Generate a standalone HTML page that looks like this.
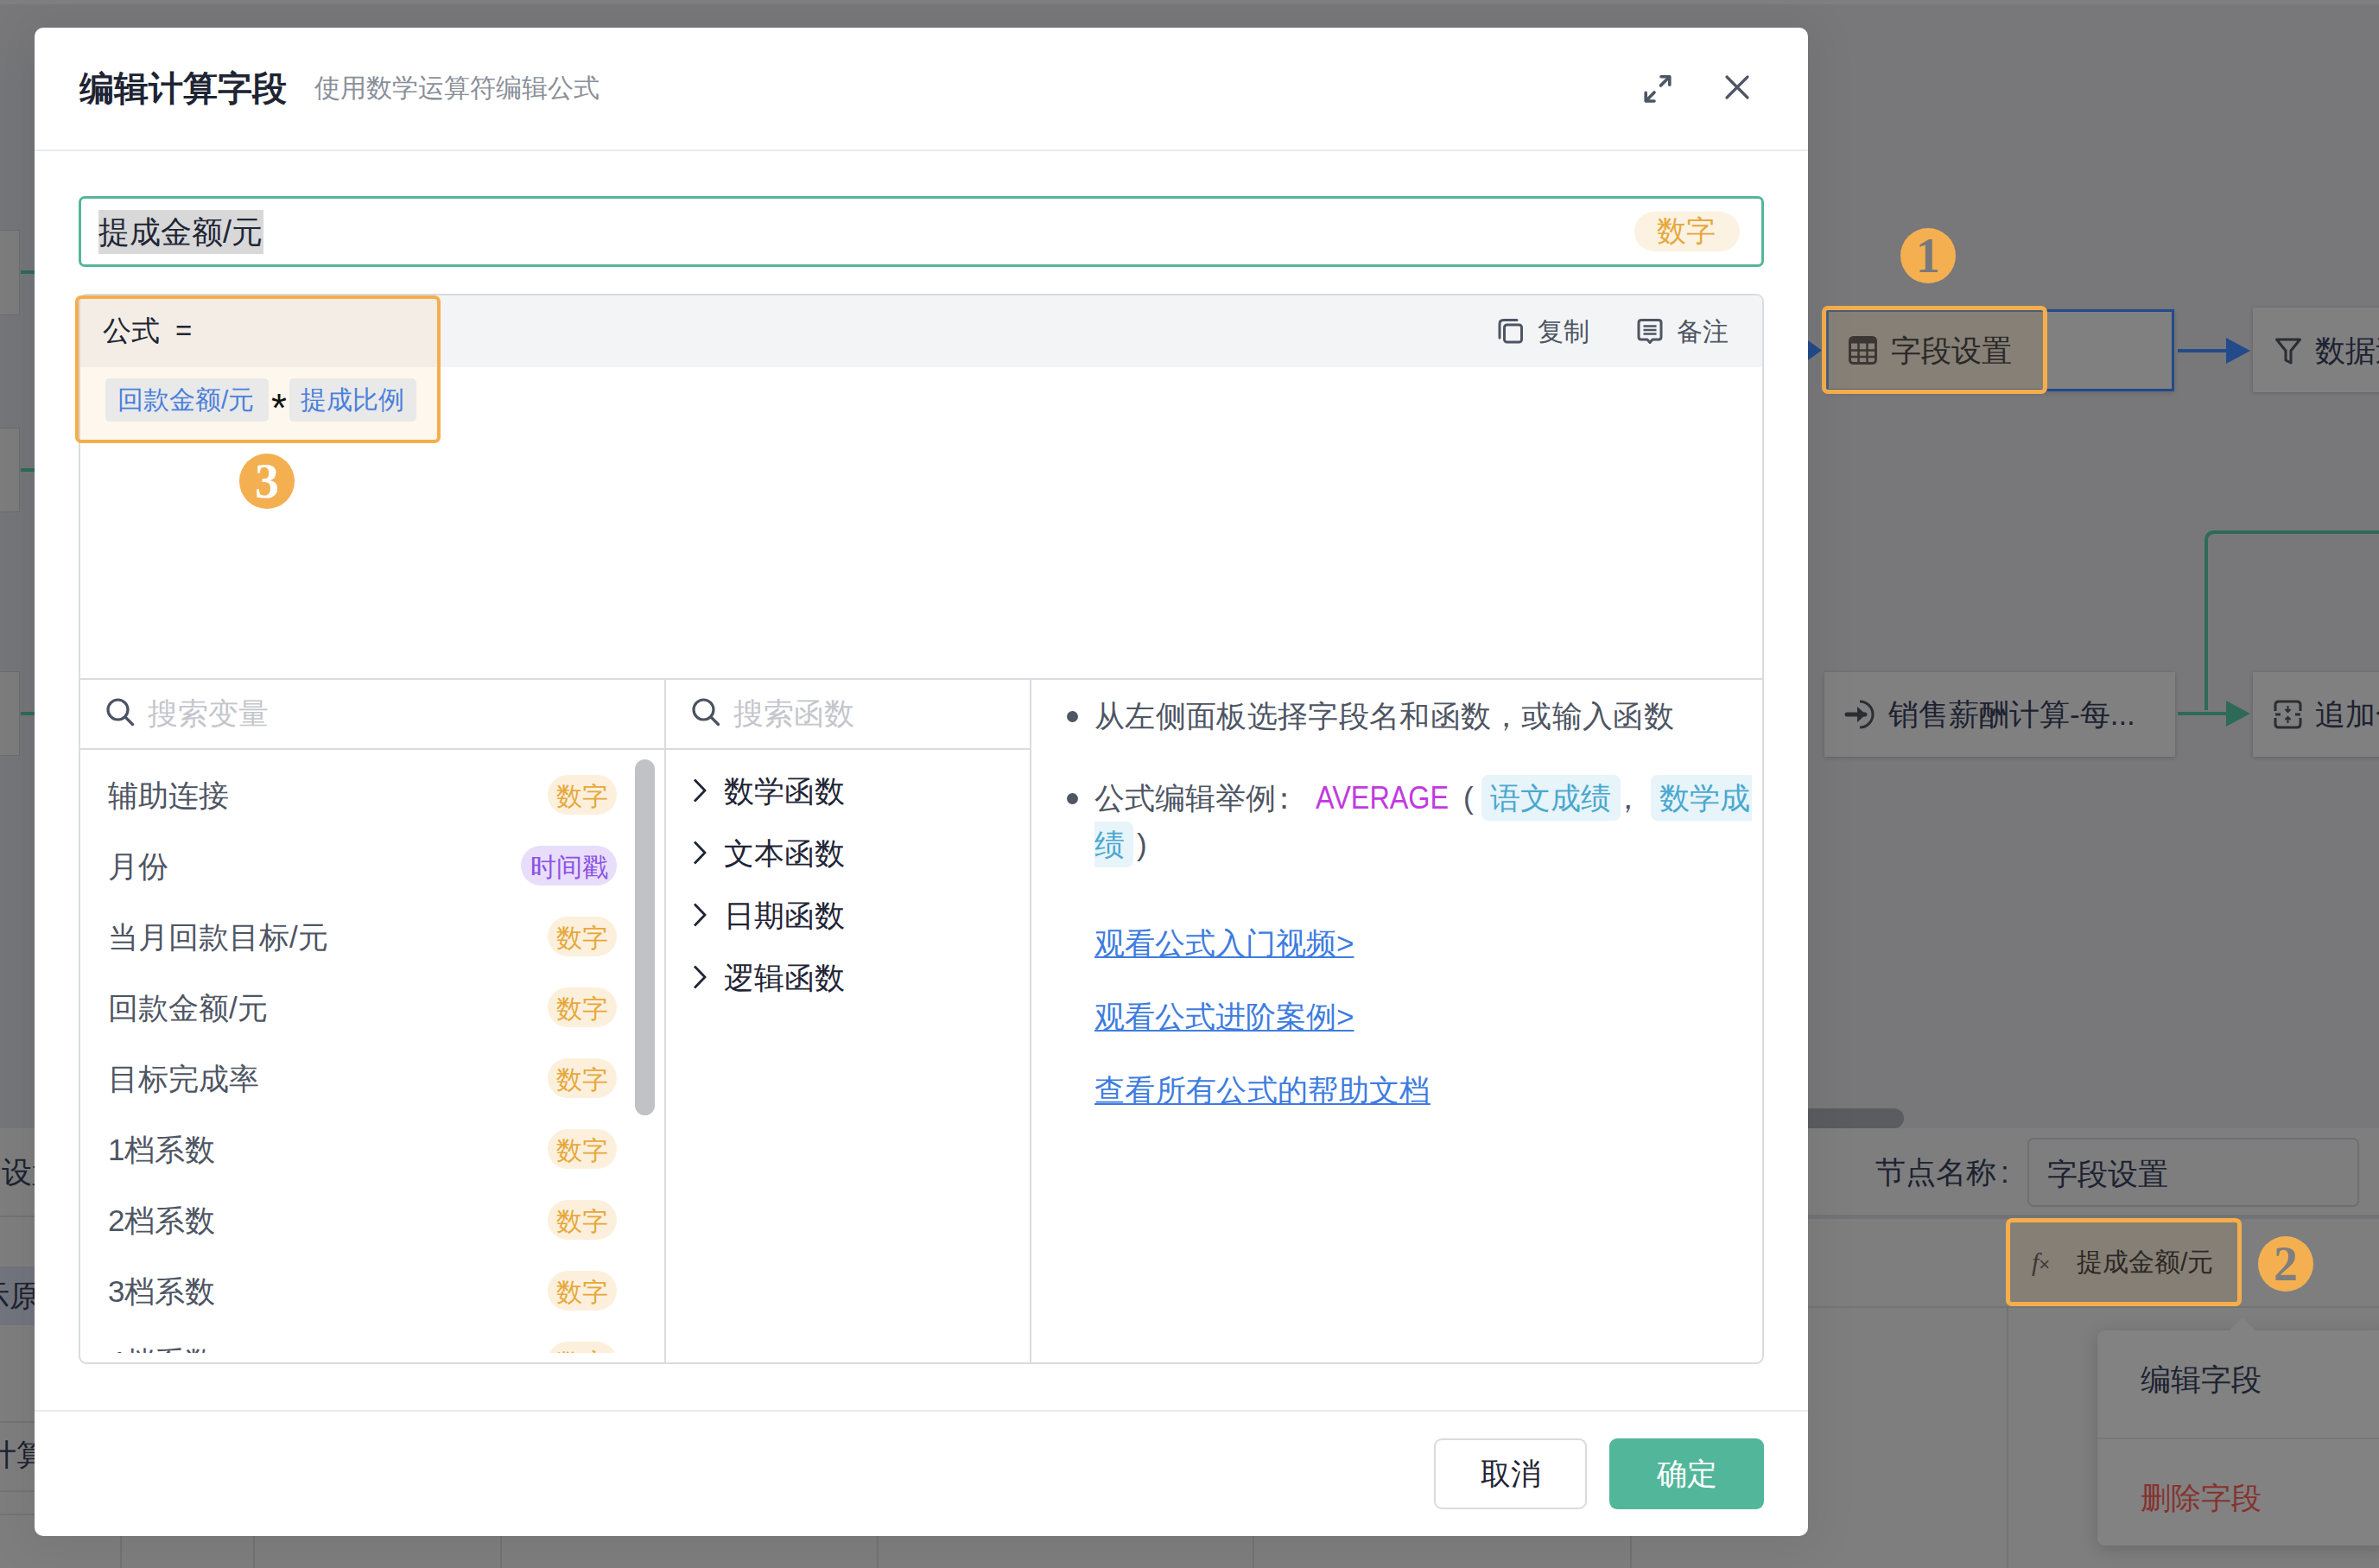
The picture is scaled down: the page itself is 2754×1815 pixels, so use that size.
<!DOCTYPE html>
<html><head><meta charset="utf-8">
<style>
html,body{margin:0;padding:0;}
body{width:2754px;height:1815px;position:relative;overflow:hidden;background:#78787b;font-family:"Liberation Sans",sans-serif;}
.a{position:absolute;}
.t{position:absolute;white-space:nowrap;line-height:1;}
.ln{position:absolute;background:#d9dbe0;}
.circ{position:absolute;width:64px;height:64px;border-radius:50%;background:#f4b050;color:#fff;font-family:"Liberation Serif",serif;font-weight:bold;font-size:56px;line-height:65px;text-align:center;}
</style></head>
<body>
<!-- ============ BACKGROUND ============ -->
<div class="a" style="left:0;top:0;width:2754px;height:5px;background:#7f7f80"></div>
<div class="a" style="left:0;top:40px;width:40px;height:1266px;background:linear-gradient(#78787b,#757679 60px)"></div>
<!-- left nodes -->
<div class="a" style="left:-4px;top:266px;width:27px;height:99px;background:#7d7d7e;border:1px solid #6c6c6e;box-sizing:border-box"></div>
<div class="a" style="left:-4px;top:495px;width:27px;height:98px;background:#7d7d7e;border:1px solid #6c6c6e;box-sizing:border-box"></div>
<div class="a" style="left:-4px;top:777px;width:27px;height:98px;background:#7d7d7e;border:1px solid #6c6c6e;box-sizing:border-box"></div>
<div class="a" style="left:24px;top:313px;width:16px;height:4px;background:#2e6a58"></div>
<div class="a" style="left:24px;top:542px;width:16px;height:4px;background:#2e6a58"></div>
<div class="a" style="left:24px;top:824px;width:16px;height:4px;background:#2e6a58"></div>

<!-- bottom panel -->
<div class="a" style="left:0;top:1306px;width:2754px;height:509px;background:#7e7e7f"></div>
<div class="a" style="left:0;top:1407px;width:40px;height:2px;background:#737375"></div><div class="a" style="left:2093px;top:1406px;width:661px;height:5px;background:#737375"></div>

<div class="a" style="left:0;top:1512px;width:2754px;height:2px;background:#737375"></div>
<div class="a" style="left:0;top:1466px;width:40px;height:68px;background:#72757e"></div>
<div class="a" style="left:0;top:1645px;width:40px;height:2px;background:#737375"></div>
<div class="a" style="left:0;top:1725px;width:40px;height:2px;background:#737375"></div>
<div class="a" style="left:0;top:1752px;width:40px;height:2px;background:#737375"></div>
<div class="a" style="left:139px;top:1770px;width:2px;height:45px;background:#737375"></div>
<div class="a" style="left:293px;top:1770px;width:2px;height:45px;background:#737375"></div>
<div class="a" style="left:579px;top:1770px;width:2px;height:45px;background:#737375"></div>
<div class="a" style="left:1015px;top:1770px;width:2px;height:45px;background:#737375"></div>
<div class="a" style="left:1450px;top:1770px;width:2px;height:45px;background:#737375"></div>
<div class="a" style="left:1887px;top:1770px;width:2px;height:45px;background:#737375"></div>
<div class="a" style="left:2323px;top:1513px;width:2px;height:302px;background:#737375"></div>
<div class="t" style="left:2px;top:1339px;font-size:35px;color:#1d2230">设置</div>
<div class="t" style="left:-24px;top:1482px;font-size:35px;color:#1d2230">示原</div>
<div class="t" style="left:-16px;top:1666px;font-size:35px;color:#1d2230">计算</div>

<!-- right canvas nodes -->
<svg class="a" style="left:2090px;top:390px" width="20" height="32"><path d="M0 2 L19 15.5 L0 29 Z" fill="#234a8a"/></svg>
<div class="a" style="left:2114px;top:358px;width:403px;height:95px;background:#808081;border:3px solid #234a8a;box-sizing:border-box;box-shadow:0 2px 6px rgba(0,0,0,0.15)"></div>
<div class="a" style="left:2109px;top:354px;width:261px;height:102px;border:5px solid #f5ae4b;border-radius:7px;box-sizing:border-box;background:rgba(150,130,100,0.35)"></div>
<svg class="a" style="left:2140px;top:389px" width="33" height="33" viewBox="0 0 33 33"><rect x="1.5" y="1.5" width="30" height="30" rx="4" fill="none" stroke="#3a3735" stroke-width="3"/><rect x="1.5" y="1.5" width="30" height="7" rx="2" fill="#3a3735"/><path d="M1.5 16.5H31.5M1.5 24H31.5M11.5 8V31M21.5 8V31" stroke="#3a3735" stroke-width="2.5"/></svg>
<div class="t" style="left:2189px;top:388px;font-size:35px;color:#2a2826">字段设置</div>
<div class="a" style="left:2521px;top:404px;width:60px;height:4px;background:#234a8a"></div>
<svg class="a" style="left:2577px;top:390px" width="30" height="32"><path d="M0 1 L28 16 L0 31 Z" fill="#234a8a"/></svg>
<div class="a" style="left:2608px;top:356px;width:160px;height:98px;background:#808081;box-shadow:0 1px 5px rgba(0,0,0,0.2)"></div>
<svg class="a" style="left:2633px;top:390px" width="32" height="34" viewBox="0 0 32 34"><path d="M2.5 3 H29.5 L19 16 V30 L13 27 V16 Z" fill="none" stroke="#2b2d33" stroke-width="3" stroke-linejoin="round"/></svg>
<div class="t" style="left:2680px;top:388px;font-size:35px;color:#1d2230">数据过滤</div>

<div class="a" style="left:2112px;top:778px;width:406px;height:98px;background:#808081;box-shadow:0 1px 5px rgba(0,0,0,0.2)"></div>
<svg class="a" style="left:2135px;top:808px" width="38" height="38" viewBox="0 0 38 38"><path d="M3 19 H24" stroke="#2b2d33" stroke-width="5" stroke-linecap="round"/><path d="M15 10 L25 19 L15 28 Z" fill="#2b2d33"/><path d="M18 4 A15 15 0 1 1 18 34" fill="none" stroke="#2b2d33" stroke-width="3"/></svg>
<div class="t" style="left:2186px;top:809px;font-size:35px;color:#1d2230">销售薪酬计算-每...</div>
<div class="a" style="left:2521px;top:824px;width:60px;height:4px;background:#2e6a58"></div>
<svg class="a" style="left:2577px;top:810px" width="30" height="32"><path d="M0 1 L28 16 L0 31 Z" fill="#2e6a58"/></svg>
<svg class="a" style="left:2540px;top:600px" width="214" height="230"><path d="M14 222 V26 Q14 16 24 16 H214" fill="none" stroke="#2e6a58" stroke-width="4"/></svg>
<div class="a" style="left:2608px;top:778px;width:160px;height:98px;background:#808081;box-shadow:0 1px 5px rgba(0,0,0,0.2)"></div>
<svg class="a" style="left:2632px;top:810px" width="33" height="34" viewBox="0 0 33 34"><path d="M2 13 V6 Q2 2 6 2 H27 Q31 2 31 6 V13 M2 21 V28 Q2 32 6 32 H27 Q31 32 31 28 V21 M2 17 H8 M25 17 H31" fill="none" stroke="#2b2d33" stroke-width="3"/><path d="M16.5 7 V14 M13.5 11 L16.5 14 L19.5 11 M16.5 27 V20 M13.5 23 L16.5 20 L19.5 23" fill="none" stroke="#2b2d33" stroke-width="2"/></svg>
<div class="t" style="left:2680px;top:809px;font-size:35px;color:#1d2230">追加合并</div>
<div class="circ" style="left:2200px;top:264px;color:#78787b">1</div>

<!-- canvas scrollbar -->
<div class="a" style="left:1990px;top:1283px;width:214px;height:23px;background:#5b5c60;border-radius:12px"></div>
<!-- property panel -->
<div class="t" style="left:2171px;top:1339px;font-size:35px;color:#1d2230">节点名称</div><div class="t" style="left:2316px;top:1339px;font-size:35px;color:#1d2230">:</div>
<div class="a" style="left:2347px;top:1317px;width:384px;height:80px;border:2px solid #6f6f72;border-radius:7px;box-sizing:border-box"></div>
<div class="t" style="left:2370px;top:1341px;font-size:35px;color:#1d2230">字段设置</div>
<div class="a" style="left:2322px;top:1410px;width:273px;height:102px;border:5px solid #f5ae4b;border-radius:7px;box-sizing:border-box;background:rgba(150,130,100,0.35)"></div>
<div class="t" style="left:2352px;top:1446px;font-size:30px;color:#3b3935;font-family:'Liberation Serif',serif;font-style:italic">f<span style="font-size:22px;font-style:normal;font-family:'Liberation Sans',sans-serif">×</span></div>
<div class="t" style="left:2404px;top:1446px;font-size:30px;color:#2a2826">提成金额/元</div>
<div class="circ" style="left:2614px;top:1431px;color:#7e7e7f">2</div>
<!-- dropdown menu -->
<div class="a" style="left:2428px;top:1540px;width:340px;height:249px;background:#828283;border-radius:8px;box-shadow:0 4px 20px rgba(0,0,0,0.18)"></div>
<svg class="a" style="left:2580px;top:1524px" width="32" height="18"><path d="M0 17 L16 1 L32 17 Z" fill="#828283"/></svg>
<div class="a" style="left:2428px;top:1664px;width:326px;height:2px;background:#787879"></div>
<div class="t" style="left:2478px;top:1579px;font-size:35px;color:#1d2230">编辑字段</div>
<div class="t" style="left:2478px;top:1716px;font-size:35px;color:#85332e">删除字段</div>

<!-- MODAL -->
<div class="a" id="modal" style="left:40px;top:32px;width:2053px;height:1746px;background:#fff;border-radius:10px;box-shadow:0 4px 50px 14px rgba(0,0,0,0.055)"></div>
<!-- header -->
<div class="t" style="left:92px;top:82px;font-size:40px;font-weight:bold;color:#1d2433">编辑计算字段</div>
<div class="t" style="left:364px;top:87px;font-size:30px;color:#8a8f99">使用数学运算符编辑公式</div>
<svg class="a" style="left:1900px;top:84px" width="38" height="38" viewBox="0 0 38 38"><g fill="none" stroke="#4e5563" stroke-width="3.6" stroke-linecap="round" stroke-linejoin="round"><path d="M23 4.8 H32.8 V14.2"/><path d="M32.3 5.3 L22.5 15"/><path d="M15 33 H5.2 V23.4"/><path d="M5.7 32.5 L15 23"/></g></svg>
<svg class="a" style="left:1994px;top:84px" width="34" height="34" viewBox="0 0 34 34"><path d="M5 5 L29 29 M29 5 L5 29" stroke="#4e5563" stroke-width="3.2" stroke-linecap="round"/></svg>
<div class="a" style="left:40px;top:173px;width:2053px;height:2px;background:#e9eaed"></div>

<!-- name input -->
<div class="a" style="left:91px;top:227px;width:1951px;height:82px;border:3px solid #55b59a;border-radius:7px;box-sizing:border-box"></div>
<div class="a" style="left:114px;top:243px;width:191px;height:51px;background:#d8d8d9"></div>
<div class="t" style="left:114px;top:251px;font-size:36px;color:#1f2635">提成金额/元</div>
<div class="a" style="left:1892px;top:245px;width:122px;height:46px;border-radius:23px;background:#fcf2e2"></div>
<div class="t" style="left:1918px;top:250px;font-size:34px;color:#e6a83b">数字</div>

<!-- editor container -->
<div class="a" style="left:91px;top:340px;width:1951px;height:1239px;border:2px solid #d9dbe0;border-radius:9px;box-sizing:border-box;overflow:hidden">
  <div class="a" style="left:0;top:0;width:1947px;height:83px;background:#f3f4f6"></div>
</div>
<div class="ln" style="left:92px;top:785px;width:1949px;height:2px"></div>
<div class="ln" style="left:92px;top:866px;width:1101px;height:2px"></div>
<div class="ln" style="left:769px;top:786px;width:2px;height:791px"></div>
<div class="ln" style="left:1192px;top:786px;width:2px;height:791px"></div>

<!-- copy / note -->
<svg class="a" style="left:1733px;top:367px" width="32" height="32" viewBox="0 0 32 32"><g fill="none" stroke="#4e5563" stroke-width="3" stroke-linecap="round"><path d="M3 24 V8 Q3 3.5 7.5 3.5 H23"/><rect x="8.5" y="9" width="20" height="20" rx="3"/></g></svg>
<div class="t" style="left:1780px;top:369px;font-size:30px;color:#4e5563">复制</div>
<svg class="a" style="left:1894px;top:367px" width="32" height="34" viewBox="0 0 32 34"><g fill="none" stroke="#4e5563" stroke-width="3" stroke-linejoin="round"><path d="M6 3.5 H26 Q29 3.5 29 6.5 V23 Q29 26 26 26 H19 L16 29.5 L13 26 H6 Q3 26 3 23 V6.5 Q3 3.5 6 3.5 Z"/></g><path d="M8.5 10.5 H23.5 M8.5 15 H23.5 M8.5 19.5 H23.5" stroke="#4e5563" stroke-width="2.5"/></svg>
<div class="t" style="left:1941px;top:369px;font-size:30px;color:#4e5563">备注</div>

<!-- formula highlight -->
<div class="a" style="left:87px;top:342px;width:423px;height:171px;border:4px solid #f5ae4b;border-radius:7px;box-sizing:border-box;background:rgba(245,174,75,0.1)"></div>
<div class="t" style="left:119px;top:366px;font-size:33px;color:#1f2635">公式</div><div class="t" style="left:203px;top:366px;font-size:33px;color:#1f2635">=</div>
<div class="a" style="left:122px;top:438px;width:189px;height:50px;border-radius:5px;background:#e9e9ea"></div>
<div class="t" style="left:136px;top:448px;font-size:30px;color:#4a80d9">回款金额/元</div>
<div class="t" style="left:314px;top:449px;font-size:46px;color:#111">*</div>
<div class="a" style="left:335px;top:438px;width:147px;height:50px;border-radius:5px;background:#e9e9ea"></div>
<div class="t" style="left:348px;top:448px;font-size:30px;color:#4a80d9">提成比例</div>
<div class="circ" style="left:277px;top:525px">3</div>

<!-- search rows -->
<svg class="a" style="left:122px;top:807px" width="36" height="36" viewBox="0 0 36 36"><circle cx="14.5" cy="14.5" r="11.5" fill="none" stroke="#4b5261" stroke-width="3.2"/><path d="M23 23 L31.5 31.5" stroke="#4b5261" stroke-width="3.2" stroke-linecap="round"/></svg>
<div class="t" style="left:171px;top:808px;font-size:35px;color:#c4c6cc">搜索变量</div>
<svg class="a" style="left:800px;top:807px" width="36" height="36" viewBox="0 0 36 36"><circle cx="14.5" cy="14.5" r="11.5" fill="none" stroke="#4b5261" stroke-width="3.2"/><path d="M23 23 L31.5 31.5" stroke="#4b5261" stroke-width="3.2" stroke-linecap="round"/></svg>
<div class="t" style="left:849px;top:808px;font-size:35px;color:#c4c6cc">搜索函数</div>

<!-- variable list -->
<div class="a" style="left:93px;top:868px;width:676px;height:698px;overflow:hidden">
 <div class="t" style="left:32px;top:35px;font-size:35px;color:#4e5563">辅助连接</div>
 <div class="a" style="left:541px;top:29px;width:80px;height:46px;border-radius:23px;background:#fcf0dc"></div>
 <div class="t" style="left:551px;top:39px;font-size:30px;color:#e6a83b">数字</div>

 <div class="t" style="left:32px;top:117px;font-size:35px;color:#4e5563">月份</div>
 <div class="a" style="left:510px;top:111px;width:111px;height:46px;border-radius:23px;background:#e8ddfa"></div>
 <div class="t" style="left:521px;top:121px;font-size:30px;color:#8a52e4">时间戳</div>

 <div class="t" style="left:32px;top:199px;font-size:35px;color:#4e5563">当月回款目标/元</div>
 <div class="a" style="left:541px;top:193px;width:80px;height:46px;border-radius:23px;background:#fcf0dc"></div>
 <div class="t" style="left:551px;top:203px;font-size:30px;color:#e6a83b">数字</div>

 <div class="t" style="left:32px;top:281px;font-size:35px;color:#4e5563">回款金额/元</div>
 <div class="a" style="left:541px;top:275px;width:80px;height:46px;border-radius:23px;background:#fcf0dc"></div>
 <div class="t" style="left:551px;top:285px;font-size:30px;color:#e6a83b">数字</div>

 <div class="t" style="left:32px;top:363px;font-size:35px;color:#4e5563">目标完成率</div>
 <div class="a" style="left:541px;top:357px;width:80px;height:46px;border-radius:23px;background:#fcf0dc"></div>
 <div class="t" style="left:551px;top:367px;font-size:30px;color:#e6a83b">数字</div>

 <div class="t" style="left:32px;top:445px;font-size:35px;color:#4e5563">1档系数</div>
 <div class="a" style="left:541px;top:439px;width:80px;height:46px;border-radius:23px;background:#fcf0dc"></div>
 <div class="t" style="left:551px;top:449px;font-size:30px;color:#e6a83b">数字</div>

 <div class="t" style="left:32px;top:527px;font-size:35px;color:#4e5563">2档系数</div>
 <div class="a" style="left:541px;top:521px;width:80px;height:46px;border-radius:23px;background:#fcf0dc"></div>
 <div class="t" style="left:551px;top:531px;font-size:30px;color:#e6a83b">数字</div>

 <div class="t" style="left:32px;top:609px;font-size:35px;color:#4e5563">3档系数</div>
 <div class="a" style="left:541px;top:603px;width:80px;height:46px;border-radius:23px;background:#fcf0dc"></div>
 <div class="t" style="left:551px;top:613px;font-size:30px;color:#e6a83b">数字</div>

 <div class="t" style="left:32px;top:691px;font-size:35px;color:#4e5563">4档系数</div>
 <div class="a" style="left:541px;top:685px;width:80px;height:46px;border-radius:23px;background:#fcf0dc"></div>
 <div class="t" style="left:551px;top:695px;font-size:30px;color:#e6a83b">数字</div>
</div>
<div class="a" style="left:735px;top:879px;width:23px;height:412px;border-radius:12px;background:#c1c2c6"></div>

<!-- function list -->
<svg class="a" style="left:800px;top:900px" width="22" height="30" viewBox="0 0 22 30"><path d="M4 2.5 L16 15 L4 27.5" fill="none" stroke="#1f2535" stroke-width="2.8"/></svg>
<div class="t" style="left:838px;top:898px;font-size:35px;color:#1f2535">数学函数</div>
<svg class="a" style="left:800px;top:972px" width="22" height="30" viewBox="0 0 22 30"><path d="M4 2.5 L16 15 L4 27.5" fill="none" stroke="#1f2535" stroke-width="2.8"/></svg>
<div class="t" style="left:838px;top:970px;font-size:35px;color:#1f2535">文本函数</div>
<svg class="a" style="left:800px;top:1044px" width="22" height="30" viewBox="0 0 22 30"><path d="M4 2.5 L16 15 L4 27.5" fill="none" stroke="#1f2535" stroke-width="2.8"/></svg>
<div class="t" style="left:838px;top:1042px;font-size:35px;color:#1f2535">日期函数</div>
<svg class="a" style="left:800px;top:1116px" width="22" height="30" viewBox="0 0 22 30"><path d="M4 2.5 L16 15 L4 27.5" fill="none" stroke="#1f2535" stroke-width="2.8"/></svg>
<div class="t" style="left:838px;top:1114px;font-size:35px;color:#1f2535">逻辑函数</div>

<!-- help panel -->
<div class="a" style="left:1235px;top:823px;width:13px;height:13px;border-radius:50%;background:#4e5563"></div>
<div class="t" style="left:1267px;top:811px;font-size:35px;letter-spacing:0.32px;color:#4e5563">从左侧面板选择字段名和函数，或输入函数</div>
<div class="a" style="left:1235px;top:918px;width:13px;height:13px;border-radius:50%;background:#4e5563"></div>
<div class="t" style="left:1267px;top:906px;font-size:35px;color:#4e5563">公式编辑举例</div><div class="t" style="left:1469px;top:906px;font-size:35px;color:#4e5563">：</div>
<div class="t" style="left:1523px;top:905px;font-size:37px;transform:scaleX(0.875);transform-origin:0 0;color:#c13ae0">AVERAGE</div>
<div class="t" style="left:1694px;top:906px;font-size:35px;color:#4e5563">(</div>
<div class="a" style="left:1715px;top:897px;width:161px;height:53px;border-radius:8px;background:#e7f4fa"></div>
<div class="t" style="left:1725px;top:906px;font-size:35px;color:#4aa8cf">语文成绩</div>
<div class="t" style="left:1867px;top:906px;font-size:35px;color:#4e5563">，</div>
<div class="a" style="left:1911px;top:897px;width:117px;height:53px;border-radius:8px 0 0 8px;background:#e7f4fa"></div>
<div class="t" style="left:1921px;top:906px;font-size:35px;color:#4aa8cf">数学成</div>
<div class="a" style="left:1267px;top:951px;width:45px;height:53px;border-radius:0 8px 8px 0;background:#e7f4fa"></div>
<div class="t" style="left:1267px;top:960px;font-size:35px;color:#4aa8cf">绩</div>
<div class="t" style="left:1316px;top:960px;font-size:35px;color:#4e5563">)</div>

<div class="t" style="left:1267px;top:1074px;font-size:35px;color:#3d7ce0;text-decoration:underline;text-decoration-thickness:2px;text-underline-offset:3px">观看公式入门视频&gt;</div>
<div class="t" style="left:1267px;top:1159px;font-size:35px;color:#3d7ce0;text-decoration:underline;text-decoration-thickness:2px;text-underline-offset:3px">观看公式进阶案例&gt;</div>
<div class="t" style="left:1267px;top:1244px;font-size:35px;color:#3d7ce0;letter-spacing:0.35px;text-decoration:underline;text-decoration-thickness:2px;text-underline-offset:3px">查看所有公式的帮助文档</div>

<!-- footer -->
<div class="a" style="left:40px;top:1632px;width:2053px;height:2px;background:#e9eaed"></div>
<div class="a" style="left:1660px;top:1665px;width:177px;height:82px;border:2px solid #d9dbe0;border-radius:9px;box-sizing:border-box"></div>
<div class="t" style="left:1714px;top:1688px;font-size:35px;color:#1f2535">取消</div>
<div class="a" style="left:1863px;top:1665px;width:179px;height:82px;border-radius:9px;background:#52b69a"></div>
<div class="t" style="left:1918px;top:1688px;font-size:35px;color:#fff">确定</div>

</body></html>
